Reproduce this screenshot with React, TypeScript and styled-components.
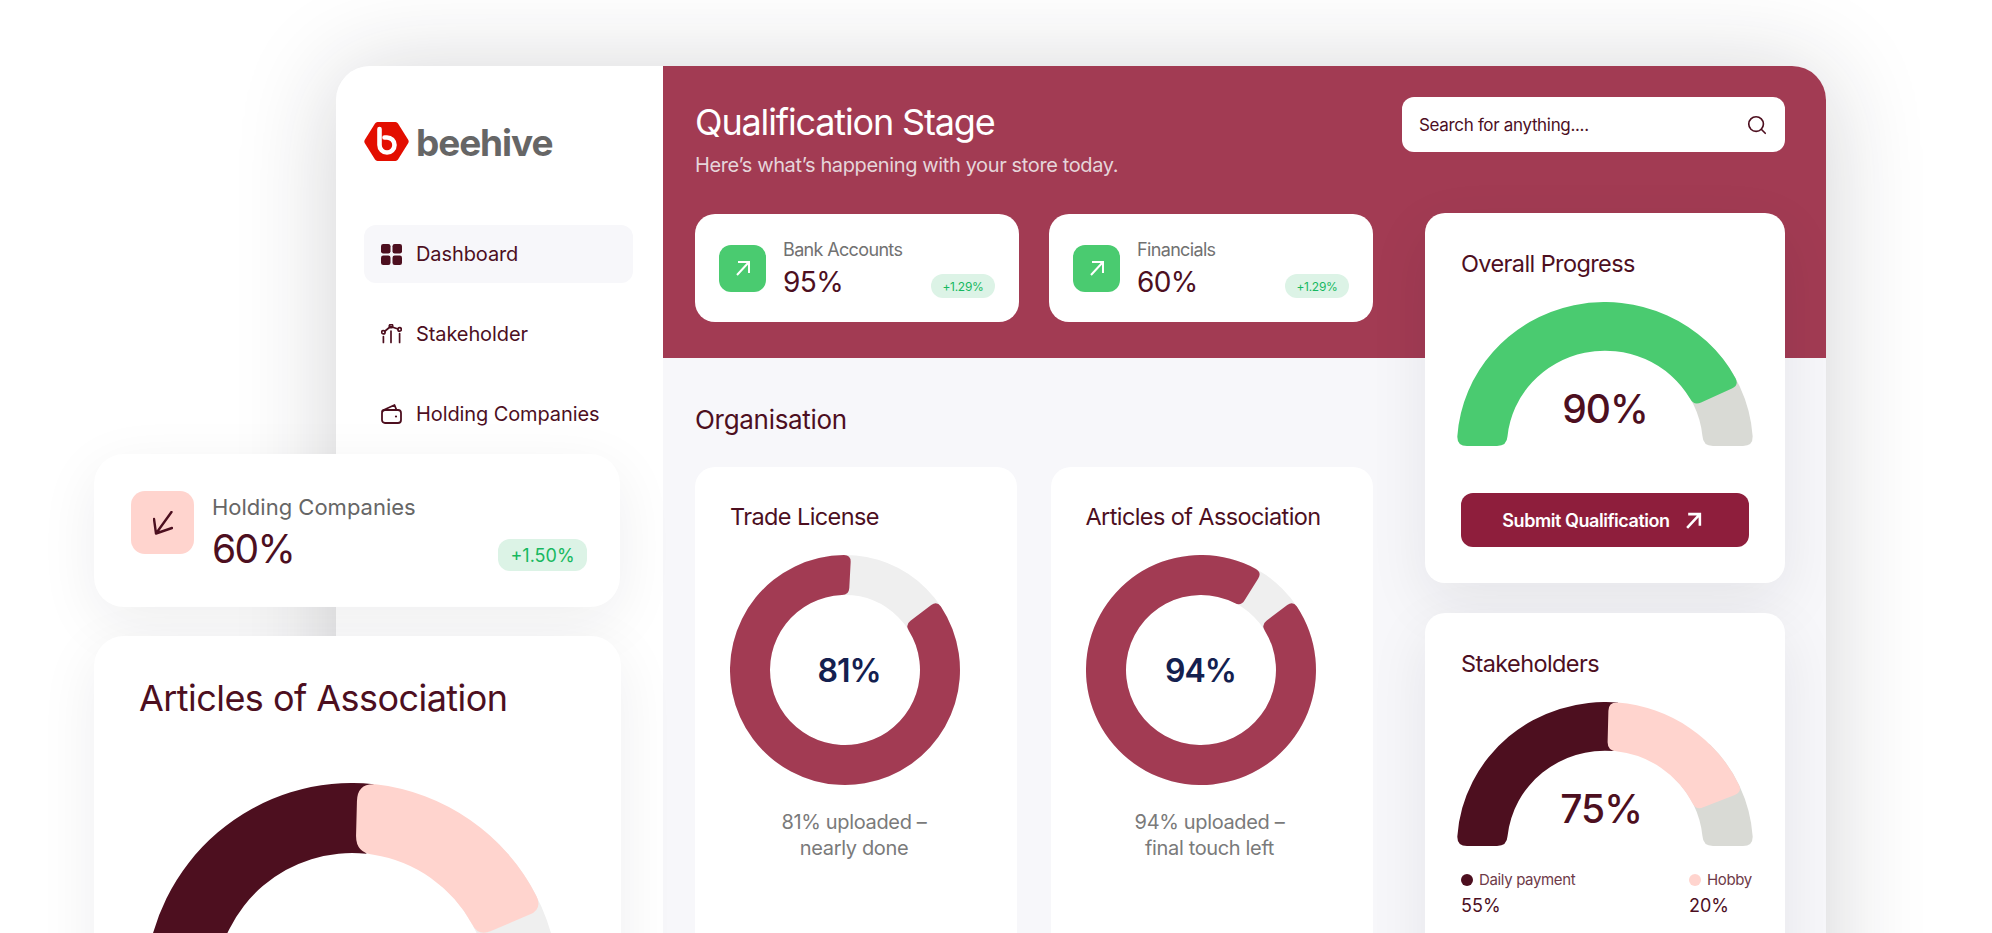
import React from 'react'
import styled, { createGlobalStyle } from 'styled-components'
import { Search } from 'lucide-react'

const GlobalStyle = createGlobalStyle`
  html, body {
    margin: 0;
    background: #fff;
    font-family: Inter, "Liberation Sans", sans-serif;
  }
  * {
    box-sizing: border-box;
  }
`

const DARK = '#4d0f1f'
const ROSE = '#a23b53'
const PINK = '#ffd4ce'
const GREEN = '#4acb70'
const STONE = '#d9dad5'
const RING = '#efefef'

const Page = styled.div`
  position: relative;
  width: 1992px;
  height: 933px;
  overflow: hidden;
  background: #fff;
  padding: 66px 0 0 336px;
`
const Window = styled.div`
  display: flex;
  width: 1490px;
  height: 1000px;
  background: #f7f7fa;
  border-radius: 34px 34px 0 0;
  box-shadow: 0 6px 100px rgba(30, 30, 40, 0.2);
  overflow: hidden;
`

const Sidebar = styled.aside`
  width: 327px;
  flex-shrink: 0;
  background: #fff;
  padding: 55px 28px 0;
`
const LogoRow = styled.div`
  display: flex;
  align-items: center;
  gap: 7px;
  height: 40px;
`
const LogoText = styled.span`
  padding-top: 4px;
  font-size: 37px;
  font-weight: 700;
  letter-spacing: -1.1px;
  color: #666;
  line-height: 40px;
`
const Nav = styled.nav`
  display: flex;
  flex-direction: column;
  gap: 22px;
  margin-top: 64px;
`
const NavItem = styled.div<{ $active?: boolean }>`
  display: flex;
  align-items: center;
  gap: 14px;
  width: 269px;
  height: 58px;
  padding-left: 17px;
  border-radius: 12px;
  font-size: 20px;
  letter-spacing: -0.1px;
  color: ${DARK};
  background: ${(props) => (props.$active ? '#f7f7fa' : 'transparent')};
`

const Main = styled.main`
  position: relative;
  flex: 1;
  padding: 31px 41px 0 32px;
  &::before {
    content: '';
    position: absolute;
    left: 0;
    right: 0;
    top: 0;
    height: 292px;
    background: ${ROSE};
  }
  & > * {
    position: relative;
  }
`
const TopRow = styled.header`
  display: flex;
  justify-content: space-between;
  align-items: flex-start;
  height: 55px;
`
const Title = styled.h1`
  margin: 3px 0 0;
  font-size: 36px;
  line-height: 44px;
  font-weight: 400;
  letter-spacing: -1.15px;
  color: #fff;
`
const Subtitle = styled.p`
  margin: 8px 0 0;
  font-size: 20px;
  line-height: 26px;
  letter-spacing: -0.37px;
  color: #e6d5da;
`
const SearchBox = styled.div`
  display: flex;
  align-items: center;
  justify-content: space-between;
  width: 383px;
  height: 55px;
  padding: 0 17px;
  background: #fff;
  border-radius: 12px;
  font-size: 17px;
  letter-spacing: -0.33px;
  color: ${DARK};
`
const Columns = styled.div`
  display: grid;
  grid-template-columns: 678px 360px;
  justify-content: space-between;
  align-items: start;
`
const LeftColumn = styled.div`
  margin-top: 62px;
`
const RightColumn = styled.div`
  display: flex;
  flex-direction: column;
  gap: 30px;
  margin-top: 61px;
`
const StatRow = styled.div`
  display: grid;
  grid-template-columns: 324px 324px;
  gap: 30px;
`
const StatCard = styled.div`
  display: flex;
  align-items: center;
  height: 108px;
  padding: 0 24px;
  background: #fff;
  border-radius: 20px;
`
const IconBox = styled.div<{ $tone: string; $size: number; $radius: number }>`
  display: flex;
  align-items: center;
  justify-content: center;
  flex-shrink: 0;
  width: ${(props) => props.$size}px;
  height: ${(props) => props.$size}px;
  border-radius: ${(props) => props.$radius}px;
  background: ${(props) => props.$tone};
`
const StatText = styled.div`
  flex: 1;
  margin: 2px 0 0 17px;
`
const StatLabel = styled.div`
  font-size: 18px;
  line-height: 22px;
  letter-spacing: -0.65px;
  color: #717171;
`
const StatValue = styled.div`
  margin-top: 4px;
  font-size: 28px;
  line-height: 34px;
  letter-spacing: -0.6px;
  color: ${DARK};
`
const Badge = styled.span`
  display: flex;
  align-items: center;
  justify-content: center;
  align-self: flex-end;
  width: 64px;
  height: 24px;
  margin-bottom: 24px;
  border-radius: 12px;
  background: #dcf3e6;
  color: #17b860;
  font-size: 12px;
  letter-spacing: -0.3px;
`
const SectionTitle = styled.h2`
  margin: 82px 0 31px;
  font-size: 26px;
  line-height: 32px;
  font-weight: 400;
  letter-spacing: -0.3px;
  color: ${DARK};
`
const DocGrid = styled.div`
  display: grid;
  grid-template-columns: 322px 322px;
  gap: 33.5px;
`
const DocCard = styled.section`
  height: 520px;
  padding: 35px 35px 0;
  background: #fff;
  border-radius: 20px;
`
const CardTitle = styled.h3`
  margin: 0;
  font-size: 23.5px;
  line-height: 30px;
  font-weight: 400;
  letter-spacing: -0.6px;
  color: ${DARK};
  white-space: nowrap;
`
const DonutWrap = styled.div`
  position: relative;
  width: 230px;
  height: 230px;
  margin-top: 23px;
`
const DonutValue = styled.div<{ $shift: number }>`
  position: absolute;
  inset: 0;
  display: flex;
  align-items: center;
  justify-content: center;
  padding-left: ${(props) => props.$shift}px;
  font-size: 32px;
  font-weight: 600;
  letter-spacing: -1px;
  color: #14204f;
`
const Caption = styled.p`
  margin: 24px -20px 0 -24px;
  font-size: 20px;
  line-height: 26px;
  letter-spacing: -0.35px;
  text-align: center;
  color: #7a7a7a;
`
const SideCard = styled.section<{ $height: number }>`
  height: ${(props) => props.$height}px;
  padding: 36px 32px 0;
  background: #fff;
  border-radius: 20px;
  box-shadow: 0 20px 60px rgba(30, 30, 40, 0.08);
`
const SideTitle = styled(CardTitle)`
  margin-left: 4px;
`
const GaugeWrap = styled.div`
  position: relative;
  width: 296px;
  height: 144px;
  margin-top: 23px;
  svg {
    display: block;
    width: 100%;
    height: 100%;
  }
`
const GaugeValue = styled.div<{ $shift: number }>`
  position: absolute;
  left: ${(props) => props.$shift}px;
  right: 0;
  bottom: 15px;
  text-align: center;
  font-size: 39px;
  line-height: 44px;
  font-weight: 550;
  letter-spacing: -1px;
  color: ${DARK};
`
const SubmitButton = styled.button`
  display: flex;
  align-items: center;
  justify-content: center;
  gap: 15px;
  width: 288px;
  height: 54px;
  margin: 47px 0 0 4px;
  padding: 0 6px 0 0;
  border: 0;
  border-radius: 12px;
  background: #8e1e3c;
  color: #fff;
  font-family: inherit;
  font-size: 18px;
  font-weight: 600;
  letter-spacing: -0.45px;
`
const Legend = styled.div`
  display: flex;
  justify-content: space-between;
  margin: 25px 0 0 4px;
`
const LegendCol = styled.div<{ $width: number }>`
  width: ${(props) => props.$width}px;
`
const LegendLabel = styled.div`
  display: flex;
  align-items: center;
  gap: 6px;
  font-size: 15px;
  line-height: 18px;
  letter-spacing: -0.35px;
  color: #6e3a48;
`
const LegendDot = styled.span<{ $tone: string }>`
  width: 12px;
  height: 12px;
  border-radius: 50%;
  background: ${(props) => props.$tone};
`
const LegendValue = styled.div`
  margin-top: 6px;
  font-size: 18px;
  line-height: 22px;
  color: ${DARK};
`

const FloatStat = styled.div`
  position: absolute;
  left: 94px;
  top: 454px;
  display: flex;
  align-items: flex-start;
  width: 526px;
  height: 153px;
  padding: 37px 33px 0 37px;
  background: #fff;
  border-radius: 30px;
  box-shadow: 0 16px 60px rgba(30, 30, 40, 0.07);
`
const FloatText = styled.div`
  flex: 1;
  margin: 3px 0 0 18px;
`
const FloatLabel = styled.div`
  font-size: 22px;
  line-height: 26px;
  color: #666;
`
const FloatValue = styled.div`
  margin-top: 5px;
  font-size: 39px;
  line-height: 48px;
  letter-spacing: -1.6px;
  color: ${DARK};
`
const FloatBadge = styled.span`
  display: flex;
  align-items: center;
  justify-content: center;
  width: 89px;
  height: 32px;
  margin-top: 48px;
  border-radius: 12px;
  background: #dcf3e6;
  color: #17b860;
  font-size: 18px;
`
const FloatDoc = styled.div`
  position: absolute;
  left: 94px;
  top: 636px;
  width: 527px;
  height: 420px;
  padding: 39px 45px 0;
  background: #fff;
  border-radius: 30px;
  box-shadow: 0 16px 60px rgba(30, 30, 40, 0.07);
  overflow: hidden;
`
const FloatTitle = styled.h3`
  margin: 0;
  font-size: 36px;
  line-height: 46px;
  font-weight: 400;
  letter-spacing: -0.55px;
  color: ${DARK};
  white-space: nowrap;
`
const FloatChart = styled.svg`
  display: block;
  width: 414px;
  height: 414px;
  margin: 62px 0 0 6px;
`

// angles are in degrees, clockwise from 12 o'clock
function sectorPath(
  cx: number,
  cy: number,
  ro: number,
  ri: number,
  from: number,
  to: number,
  rs = 0,
  re = 0
) {
  const p = (r: number, deg: number) => {
    const a = (deg * Math.PI) / 180
    return `${(cx + r * Math.sin(a)).toFixed(2)} ${(cy - r * Math.cos(a)).toFixed(2)}`
  }
  const span = (len: number, r: number) => ((len / r) * 180) / Math.PI
  const large = to - from > 180 ? 1 : 0
  return [
    `M ${p(ro, from + span(rs, ro))}`,
    `A ${ro} ${ro} 0 ${large} 1 ${p(ro, to - span(re, ro))}`,
    `Q ${p(ro, to)} ${p(ro - re, to)}`,
    `L ${p(ri + re, to)}`,
    `Q ${p(ri, to)} ${p(ri, to - span(re, ri))}`,
    `A ${ri} ${ri} 0 ${large} 0 ${p(ri, from + span(rs, ri))}`,
    `Q ${p(ri, from)} ${p(ri + rs, from)}`,
    `L ${p(ro - rs, from)}`,
    `Q ${p(ro, from)} ${p(ro, from + span(rs, ro))}`,
    'Z'
  ].join(' ')
}

const Donut = ({ value, end, shift }: { value: string; end: number; shift: number }) => (
  <DonutWrap>
    <svg width="230" height="230" viewBox="0 0 230 230">
      <circle cx="115" cy="115" r="95" fill="none" stroke={RING} strokeWidth="40" />
      <path d={sectorPath(115, 115, 115, 75, 53, end, 7, 7)} fill={ROSE} />
    </svg>
    <DonutValue $shift={shift}>{value}</DonutValue>
  </DonutWrap>
)

const GaugeSvg = ({ children }: { children: React.ReactNode }) => (
  <svg viewBox="0 0 296 148" preserveAspectRatio="none">
    {children}
  </svg>
)

const sector = (from: number, to: number, rs: number, re: number) =>
  sectorPath(148, 148, 148, 98, from, to, rs, re)

const ArrowUp = ({ size = 16, stroke = 2 }: { size?: number; stroke?: number }) => (
  <svg width={size} height={size} viewBox="0 0 16 16" fill="none" stroke="#fff" strokeWidth={stroke}>
    <path d="M2 15 L14 2 M3 2 H14 V13" strokeLinejoin="miter" />
  </svg>
)

const ArrowDown = () => (
  <svg width="20" height="24" viewBox="0 0 20 24" fill="none" stroke={DARK} strokeWidth="2.4" strokeLinecap="round" strokeLinejoin="round">
    <path d="M18.5 1 L3 22.5 M1 8 L3 22.5 L19 17" />
  </svg>
)

const LogoMark = () => (
  <svg width="45" height="41" viewBox="0 0 45 41">
    <path
      d="M13.5 1 H31.5 A3 3 0 0 1 34 2.5 L44 18.5 A3.5 3.5 0 0 1 44 22.5 L34 38.5 A3 3 0 0 1 31.5 40 H13.5 A3 3 0 0 1 11 38.5 L1 22.5 A3.5 3.5 0 0 1 1 18.5 L11 2.5 A3 3 0 0 1 13.5 1 Z"
      fill="#e30e00"
    />
    <path
      d="M15.5 8 V24 A7.5 7.5 0 1 0 23 16.5 H20.5"
      fill="none"
      stroke="#fff"
      strokeWidth="4.6"
      strokeLinecap="round"
    />
  </svg>
)

const DashboardIcon = () => (
  <svg width="21" height="21" viewBox="0 0 21 21" fill={DARK}>
    <rect x="0" y="0" width="9.5" height="9.5" rx="2.2" />
    <rect x="11.5" y="0" width="9.5" height="9.5" rx="2.2" />
    <rect x="0" y="11.5" width="9.5" height="9.5" rx="2.2" />
    <rect x="11.5" y="11.5" width="9.5" height="9.5" rx="2.2" />
  </svg>
)

const StakeholderIcon = () => (
  <svg width="21" height="20" viewBox="0 0 21 20" fill="none" stroke={DARK} strokeWidth="1.7" strokeLinecap="round">
    <path d="M3.5 7.5 L9.5 2.5 L17 5" />
    <circle cx="2.4" cy="8.2" r="1.7" />
    <circle cx="10" cy="2" r="1.7" />
    <circle cx="18.6" cy="5.4" r="1.7" />
    <path d="M2.4 12.5 V18.5 M10 7 V18.5 M18.6 9.5 V18.5" />
  </svg>
)

const WalletIcon = () => (
  <svg width="21" height="20" viewBox="0 0 21 20" fill="none" stroke={DARK} strokeWidth="1.8" strokeLinejoin="round">
    <rect x="1" y="6" width="19" height="13" rx="3" />
    <path d="M1.5 8 V6.5 L13.5 1 L15.5 6" />
    <circle cx="15" cy="12.5" r="1.1" fill={DARK} stroke="none" />
  </svg>
)

export default function App() {
  return (
    <>
      <GlobalStyle />
      <Page>
        <Window>
          <Sidebar>
            <LogoRow>
              <LogoMark />
              <LogoText>beehive</LogoText>
            </LogoRow>
            <Nav>
              <NavItem $active>
                <DashboardIcon />
                Dashboard
              </NavItem>
              <NavItem>
                <StakeholderIcon />
                Stakeholder
              </NavItem>
              <NavItem>
                <WalletIcon />
                Holding Companies
              </NavItem>
            </Nav>
          </Sidebar>
          <Main>
            <TopRow>
              <div>
                <Title>Qualification Stage</Title>
                <Subtitle>Here’s what’s happening with your store today.</Subtitle>
              </div>
              <SearchBox>
                Search for anything....
                <Search size={22} color={DARK} strokeWidth={1.8} />
              </SearchBox>
            </TopRow>
            <Columns>
              <LeftColumn>
                <StatRow>
                  <StatCard>
                    <IconBox $tone={GREEN} $size={47} $radius={12}>
                      <ArrowUp />
                    </IconBox>
                    <StatText>
                      <StatLabel>Bank Accounts</StatLabel>
                      <StatValue>95%</StatValue>
                    </StatText>
                    <Badge>+1.29%</Badge>
                  </StatCard>
                  <StatCard>
                    <IconBox $tone={GREEN} $size={47} $radius={12}>
                      <ArrowUp />
                    </IconBox>
                    <StatText>
                      <StatLabel>Financials</StatLabel>
                      <StatValue>60%</StatValue>
                    </StatText>
                    <Badge>+1.29%</Badge>
                  </StatCard>
                </StatRow>
                <SectionTitle>Organisation</SectionTitle>
                <DocGrid>
                  <DocCard>
                    <CardTitle>Trade License</CardTitle>
                    <Donut value="81%" end={363} shift={8} />
                    <Caption>
                      81% uploaded –<br />
                      nearly done
                    </Caption>
                  </DocCard>
                  <DocCard>
                    <CardTitle>Articles of Association</CardTitle>
                    <Donut value="94%" end={392} shift={0} />
                    <Caption>
                      94% uploaded –<br />
                      final touch left
                    </Caption>
                  </DocCard>
                </DocGrid>
              </LeftColumn>
              <RightColumn>
                <SideCard $height={370}>
                  <SideTitle>Overall Progress</SideTitle>
                  <GaugeWrap>
                    <GaugeSvg>
                      <path d={sector(45, 90, 0, 10)} fill={STONE} />
                      <path d={sector(-90, 65, 10, 8)} fill={GREEN} />
                    </GaugeSvg>
                    <GaugeValue $shift={0}>90%</GaugeValue>
                  </GaugeWrap>
                  <SubmitButton>
                    Submit Qualification
                    <ArrowUp size={17} stroke={2.4} />
                  </SubmitButton>
                </SideCard>
                <SideCard $height={500}>
                  <SideTitle>Stakeholders</SideTitle>
                  <GaugeWrap>
                    <GaugeSvg>
                      <path d={sector(45, 90, 0, 10)} fill={STONE} />
                      <path d={sector(-90, 5, 10, 0)} fill={DARK} />
                      <path d={sector(1.4, 68, 9, 8)} fill={PINK} />
                    </GaugeSvg>
                    <GaugeValue $shift={-8}>75%</GaugeValue>
                  </GaugeWrap>
                  <Legend>
                    <LegendCol $width={228}>
                      <LegendLabel>
                        <LegendDot $tone={DARK} />
                        Daily payment
                      </LegendLabel>
                      <LegendValue>55%</LegendValue>
                    </LegendCol>
                    <LegendCol $width={64}>
                      <LegendLabel>
                        <LegendDot $tone={PINK} />
                        Hobby
                      </LegendLabel>
                      <LegendValue>20%</LegendValue>
                    </LegendCol>
                  </Legend>
                </SideCard>
              </RightColumn>
            </Columns>
          </Main>
        </Window>

        <FloatStat>
          <IconBox $tone={PINK} $size={63} $radius={14}>
            <ArrowDown />
          </IconBox>
          <FloatText>
            <FloatLabel>Holding Companies</FloatLabel>
            <FloatValue>60%</FloatValue>
          </FloatText>
          <FloatBadge>+1.50%</FloatBadge>
        </FloatStat>

        <FloatDoc>
          <FloatTitle>Articles of Association</FloatTitle>
          <FloatChart viewBox="0 0 414 414">
            <path d={sectorPath(207, 207, 207, 137, 40, 180)} fill={RING} />
            <path d={sectorPath(207, 207, 207, 137, 180, 366)} fill={DARK} />
            <path d={sectorPath(207, 207, 207, 137, 1.5, 67, 18, 14)} fill={PINK} />
          </FloatChart>
        </FloatDoc>
      </Page>
    </>
  )
}
